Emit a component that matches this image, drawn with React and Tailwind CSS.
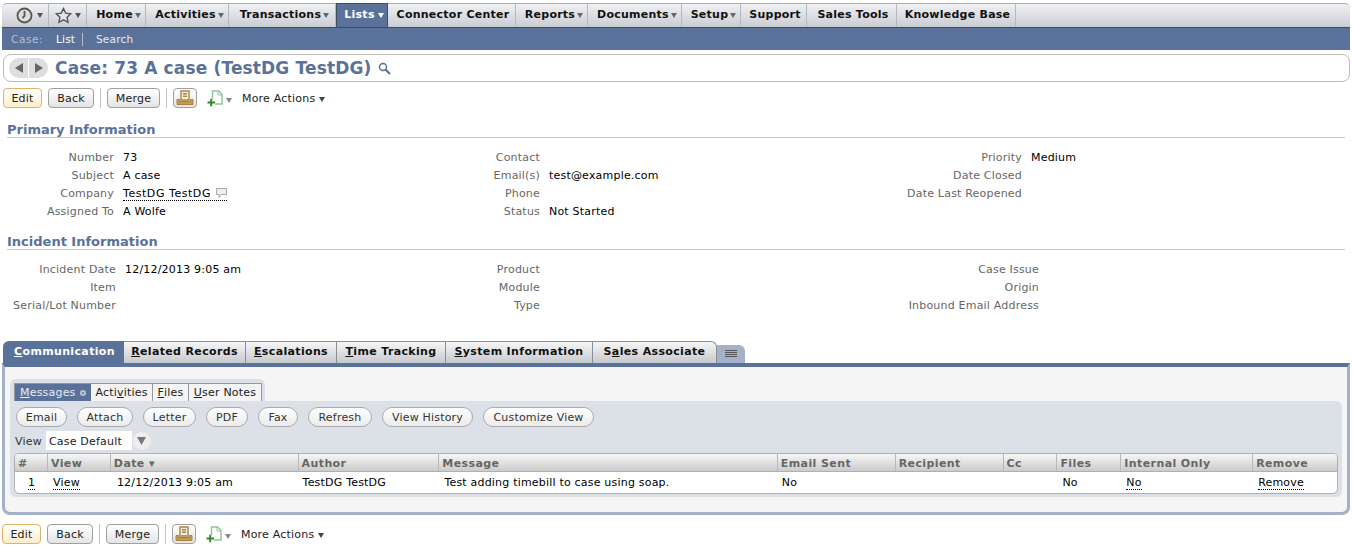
import React from 'react'

const navTabs = [
	{label: 'Home', w: 'w-[59px]', caret: true},
	{label: 'Activities', w: 'w-[83px]', caret: true},
	{label: 'Transactions', w: 'w-[107px]', caret: true},
	{label: 'Lists', w: 'w-[52px]', caret: true, active: true},
	{label: 'Connector Center', w: 'w-[128px]'},
	{label: 'Reports', w: 'w-[72px]', caret: true},
	{label: 'Documents', w: 'w-[94px]', caret: true},
	{label: 'Setup', w: 'w-[59px]', caret: true},
	{label: 'Support', w: 'w-[66px]'},
	{label: 'Sales Tools', w: 'w-[90px]'},
	{label: 'Knowledge Base', w: 'w-[119px]'},
]

const primaryRows = [
	['Number', '73', 'Contact', '', 'Priority', 'Medium'],
	['Subject', 'A case', 'Email(s)', 'test@example.com', 'Date Closed', ''],
	['Company', 'company', 'Phone', '', 'Date Last Reopened', ''],
	['Assigned To', 'A Wolfe', 'Status', 'Not Started', '', ''],
]

const incidentRows = [
	['Incident Date', '12/12/2013 9:05 am', 'Product', '', 'Case Issue', ''],
	['Item', '', 'Module', '', 'Origin', ''],
	['Serial/Lot Number', '', 'Type', '', 'Inbound Email Address', ''],
]

const mainTabs = [
	{pre: '', key: 'C', rest: 'ommunication', w: 'w-[121px] pl-[2px]', active: true},
	{pre: '', key: 'R', rest: 'elated Records', w: 'w-[122px]'},
	{pre: '', key: 'E', rest: 'scalations', w: 'w-[91px]'},
	{pre: '', key: 'T', rest: 'ime Tracking', w: 'w-[109px]'},
	{pre: '', key: 'S', rest: 'ystem Information', w: 'w-[147px]'},
	{pre: 'S', key: 'a', rest: 'les Associate', w: 'w-[124px]'},
]

const pills = [
	['Email', 'w-[51px] mr-[10px]'],
	['Attach', 'w-[56px] mr-[10px]'],
	['Letter', 'w-[53px] mr-[10px]'],
	['PDF', 'w-[42px] mr-[10px]'],
	['Fax', 'w-[40px] mr-[10px]'],
	['Refresh', 'w-[64px] mr-[10px]'],
	['View History', 'w-[91px] mr-[10px]'],
	['Customize View', 'w-[111px]'],
]

const columns = [
	['#', 'w-[32px]'],
	['View', 'w-[63px]'],
	['Date ▾', 'w-[188px]'],
	['Author', 'w-[141px]'],
	['Message', 'w-[339px]'],
	['Email Sent', 'w-[118px]'],
	['Recipient', 'w-[108px]'],
	['Cc', 'w-[54px]'],
	['Files', 'w-[64px]'],
	['Internal Only', 'w-[132px]'],
	['Remove', 'w-[85px]'],
]

function Caret({className = 'text-[#555]'})
{
	return (
		<svg width="6" height="5" viewBox="0 0 6 5" className={className}>
			<path d="M0 0h6L3 5z" fill="currentColor" />
		</svg>
	)
}

function Dotted({children})
{
	return <span className="border-b border-dotted border-black leading-[13px] inline-block">{children}</span>
}

function PrintIcon()
{
	return (
		<svg width="18" height="16" viewBox="0 0 18 16" fill="none">
			<path d="M5 1h8v9H5z" fill="#f8f1df" stroke="#a98440" strokeWidth="1.4" />
			<path d="M7 3.7h4M7 6.3h4" stroke="#a98440" strokeWidth="1.4" />
			<path d="M1 9.5v5h16v-5h-2.5v2h-11v-2z" fill="#c29b55" stroke="#a98440" />
		</svg>
	)
}

function AddIcon()
{
	return (
		<svg width="17" height="17" viewBox="0 0 17 17" fill="none">
			<path d="M5.5 9V1h6l3.5 3.5V14H8" fill="#fff" stroke="#93c793" strokeWidth="1.5" />
			<path d="M11 1v4h4" stroke="#93c793" />
			<path d="M0.5 12.5h7.5M4.2 8.7v7.6" stroke="#2f8a2f" strokeWidth="2" />
		</svg>
	)
}

function ActionBar({className})
{
	const btn = 'flex items-center justify-center pt-[2px] h-[20px] rounded-[4px] border border-[#a0a0a0] bg-gradient-to-b from-white to-[#e4e4e4] text-[#222]'
	return (
		<div className={`flex items-center h-[20px] ${className}`}>
			<button className="flex items-center justify-center pt-[2px] w-[39px] h-[20px] rounded-[4px] border border-[#dfb468] bg-gradient-to-b from-white to-[#fdeecb] text-[#222]">Edit</button>
			<button className={`${btn} w-[46px] ml-[6px]`}>Back</button>
			<div className="w-px h-[20px] bg-[#c4c4c4] ml-[6px]" />
			<button className={`${btn} w-[53px] ml-[6px]`}>Merge</button>
			<div className="w-px h-[20px] bg-[#c4c4c4] ml-[6px]" />
			<button className="flex items-center justify-center w-[24px] h-[20px] ml-[6px] rounded-[4px] border border-[#a0a0a0] bg-gradient-to-b from-white to-[#e4e4e4]"><PrintIcon /></button>
			<div className="ml-[10px]"><AddIcon /></div>
			<div className="ml-[2px] mt-[4px]"><Caret className="text-[#888]" /></div>
			<div className="flex items-center gap-[4px] pt-[3px] ml-[10px] text-[#222]">More Actions <Caret className="text-[#444]" /></div>
		</div>
	)
}

function Fields({rows, cols, firstLabel, firstValue})
{
	const label = 'text-right text-[#666] whitespace-nowrap'
	return (
		<div className={`grid h-[72px] auto-rows-[18px] items-center ${cols}`}>
			{rows.map((r) => (
				<React.Fragment key={r[0]}>
					<div className={`${label} ${firstLabel}`}>{r[0]}</div>
					<div className={`${firstValue} text-black`}>
						{r[1] === 'company' ? (
							<span className="inline-flex items-center border-b border-dotted border-black leading-[13px] tracking-[0.55px]">
								TestDG TestDG
								<svg width="11" height="10" viewBox="0 0 11 10" className="ml-[5px]">
									<path d="M.5.5h10v6H5L3 9.5v-3H.5z" fill="#eee" stroke="#aaa" />
								</svg>
							</span>
						) : r[1]}
					</div>
					<div className={label}>{r[2]}</div>
					<div className="pl-[9px] text-black">{r[3]}</div>
					<div className={label}>{r[4]}</div>
					<div className="pl-[9px] text-black">{r[5]}</div>
				</React.Fragment>
			))}
		</div>
	)
}

function SectionHead({children, className})
{
	return (
		<div className={`ml-[7px] mr-[8px] h-[16px] pt-px border-b border-[#c8c8c8] text-[13px] leading-[14px] font-bold tracking-normal text-[#5a7299] ${className}`}>
			{children}
		</div>
	)
}

export default function App()
{
	return (
		<div className="w-[1353px] h-[550px] overflow-hidden bg-white text-[11px] tracking-[0.2px] font-['DejaVu_Sans','Liberation_Sans',sans-serif]">

			{/* top nav */}
			<div className="flex h-[24px] mt-[3px] ml-[2px] mr-[3px] rounded-t-[5px] border-t border-[#a8aeb8] bg-gradient-to-b from-[#f0f1f3] to-[#c9ccd2] tracking-[0.25px]">
				<div className="flex items-center justify-center gap-[4px] w-[47px] pl-[9px] border-r border-[#b4b9c2]">
					<svg width="17" height="17" viewBox="0 0 17 17" fill="none" stroke="#555" strokeWidth="1.8">
						<circle cx="8.5" cy="8.5" r="7" fill="#ddd" />
						<path d="M8.5 4v5L6.5 11" />
					</svg>
					<Caret />
				</div>
				<div className="flex items-center justify-center gap-[3px] w-[38px] border-r border-[#b4b9c2]">
					<svg width="17" height="17" viewBox="0 0 17 17" fill="#e4e5e8" stroke="#555" strokeWidth="1.4">
						<path d="M8.5 1.5l2.2 4.6 5 .7-3.6 3.5.9 5-4.5-2.4L4 15.3l.9-5L1.3 6.8l5-.7z" />
					</svg>
					<Caret />
				</div>
				{navTabs.map((t) => (
					t.active ? (
						<div key={t.label} className={`flex items-center justify-center gap-[3px] ${t.w} pl-[4px] -mt-px h-[24px] border-t border-x border-[#3e4b60] bg-[#5a7299] font-bold text-white`}>
							{t.label}<Caret className="text-white" />
						</div>
					) : (
						<div key={t.label} className={`flex items-center justify-center gap-[2px] ${t.w} ${t.caret ? 'pl-[5px]' : 'pl-[3px]'} border-r border-[#b4b9c2] font-bold text-[#111]`}>
							{t.label}{t.caret && <Caret className="text-[#666]" />}
						</div>
					)
				))}
			</div>

			{/* sub nav */}
			<div className="flex items-center h-[23px] pt-px ml-[2px] mr-[3px] border-t border-[#3e4b60] bg-[#5a7299] text-[10.5px] pl-[9px]">
				<span className="w-[45px] tracking-[0.6px] text-[#b4c0d2]">Case:</span>
				<span className="w-[26px] text-white">List</span>
				<div className="w-px h-[13px] -mt-px bg-[#b4c0d2]" />
				<span className="ml-[13px] text-[#e6ebf2]">Search</span>
			</div>

			{/* title */}
			<div className="flex items-center h-[28px] mt-[4px] ml-[3px] mr-[3px] pl-[5px] rounded-[8px] border border-[#bcbcbc]">
				<div className="flex items-center justify-center w-[19px] h-[20px] rounded-l-full bg-[#dedede]">
					<svg width="8" height="10" viewBox="0 0 8 10"><path d="M8 0v10L0 5z" fill="#666" /></svg>
				</div>
				<div className="flex items-center justify-center w-[19px] h-[20px] ml-px rounded-r-full bg-[#dedede]">
					<svg width="8" height="10" viewBox="0 0 8 10"><path d="M0 0v10l8-5z" fill="#666" /></svg>
				</div>
				<h1 className="ml-[7px] pt-[2px] text-[17px] font-bold tracking-[0.15px] text-[#5a7299] whitespace-nowrap">Case: 73 A case (TestDG TestDG)</h1>
				<svg width="13" height="13" viewBox="0 0 13 13" fill="none" stroke="#5a7299" className="ml-[6px] mt-px">
					<circle cx="5" cy="5" r="3.5" strokeWidth="1.5" />
					<path d="M7.5 7.5l4.5 4.5" strokeWidth="2.2" />
				</svg>
			</div>

			<ActionBar className="mt-[6px] ml-[3px]" />

			<SectionHead className="mt-[14px]">Primary Information</SectionHead>
			<div className="mt-[11px]">
				<Fields rows={primaryRows} cols="grid-cols-[116px_309px_115px_367px_115px_1fr]" firstLabel="pr-[2px]" firstValue="pl-[7px]" />
			</div>

			<SectionHead className="mt-[13px]">Incident Information</SectionHead>
			<div className="mt-[11px]">
				<Fields rows={incidentRows} cols="grid-cols-[116px_309px_115px_367px_132px_1fr]" firstLabel="" firstValue="pl-[9px]" />
			</div>

			{/* tabs */}
			<div className="flex items-end h-[22px] mt-[8px] ml-[3px]">
				{mainTabs.map((t, i) => (
					<div
						key={t.rest}
						className={`flex items-center justify-center ${t.w} h-[22px] border-t text-[11px] tracking-[0.35px] font-bold ${
							t.active
								? 'rounded-tl-[6px] border-[#5a7299] bg-[#5a7299] text-white'
								: `border-r border-[#8a8f98] bg-gradient-to-b from-[#f6f6f6] to-[#c6c9ce] text-[#111] ${i === mainTabs.length - 1 ? 'rounded-tr-[6px]' : ''}`
						}`}
					>
						<span>{t.pre}<u>{t.key}</u>{t.rest}</span>
					</div>
				))}
				<div className="flex items-center justify-center w-[28px] h-[18px] rounded-tr-[6px] bg-[#a5b1c8]">
					<svg width="12" height="8" viewBox="0 0 12 8">
						<path d="M0 .5h12M0 2.5h12M0 4.5h12M0 6.5h12" stroke="#555" />
					</svg>
				</div>
			</div>

			{/* tab panel */}
			<div className="h-[152px] ml-[2px] mr-[3px] rounded-b-[8px] border-x-[3px] border-b-[3px] border-t-[4px] border-x-[#a5b1c8] border-b-[#a5b1c8] border-t-[#5a7299] bg-[#f5f5f5] pt-[12px] pl-[5px] pr-[5px]">
				<div className="w-[255px] h-[22px] pl-[4px] pt-[4px] rounded-t-[6px] bg-[#dce0e7]">
					<div className="flex h-[18px] w-[248px] border border-[#999] border-b-0 bg-[#f4f4f4]">
						<div className="flex items-center gap-[4px] w-[76px] pl-[5px] pt-px bg-[#5a7299] text-[#e8edf4]">
							<span><u>M</u>essages</span>
							<span className="w-[6px] h-[6px] rounded-full border-2 border-[#b9c3d3] bg-[#5a7299]" />
						</div>
						<div className="flex items-center justify-center w-[62px] pt-px border-r border-[#999] text-[#222]">Acti<u>v</u>ities</div>
						<div className="flex items-center justify-center w-[36px] pt-px border-r border-[#999] text-[#222]"><u>F</u>iles</div>
						<div className="flex items-center justify-center flex-1 pt-px text-[#222]"><u>U</u>ser Notes</div>
					</div>
				</div>
				<div className="h-[96px] rounded-b-[6px] rounded-tr-[6px] bg-[#dce0e7] px-[4px] pt-[6px]">
					<div className="flex h-[20px] ml-[2px]">
						{pills.map(([label, cls]) => (
							<button key={label} className={`flex items-center justify-center pt-[3px] h-[20px] rounded-full border border-[#aaa] bg-gradient-to-b from-white to-[#ebebeb] text-[#333] ${cls}`}>
								{label}
							</button>
						))}
					</div>
					<div className="flex items-center h-[19px] mt-[4px] ml-px pt-[3px] text-[#333]">
						<span>View</span>
						<div className="flex items-center w-[86px] h-[19px] -mt-[3px] ml-[4px] pt-[3px] pl-[3px] bg-white text-[#222]">Case Default</div>
						<div className="flex items-center justify-center w-[18px] h-[18px] -mt-[3px] ml-px rounded-full bg-[#eeeeee]">
							<svg width="9" height="8" viewBox="0 0 9 8"><path d="M0 0h9L4.5 8z" fill="#777" /></svg>
						</div>
					</div>
					<div className="w-[1324px] h-[41px] mt-[3px] rounded-[5px] border border-[#b0b0b0] bg-white overflow-hidden">
						<div className="flex h-[18px] border-b border-[#b0b0b0] bg-gradient-to-b from-[#f7f7f7] to-[#cbcbcb]">
							{columns.map(([label, w], i) => (
								<div key={label} className={`flex items-center ${w} ${i > 0 ? 'border-l border-[#b8b8b8]' : ''} pl-[3px] pt-[3px] font-bold tracking-[0.4px] text-[#666] whitespace-nowrap`}>
									{label}
								</div>
							))}
						</div>
						<div className="flex h-[21px] items-center pt-px text-black">
							<div className="w-[32px] pl-[13px]"><Dotted>1</Dotted></div>
							<div className="w-[63px] pl-[6px]"><Dotted>View</Dotted></div>
							<div className="w-[188px] pl-[7px]">12/12/2013 9:05 am</div>
							<div className="w-[141px] pl-[5px]">TestDG TestDG</div>
							<div className="w-[339px] pl-[6px]">Test adding timebill to case using soap.</div>
							<div className="w-[118px] pl-[5px]">No</div>
							<div className="w-[108px]" />
							<div className="w-[54px]" />
							<div className="w-[64px] pl-[6px]">No</div>
							<div className="w-[132px] pl-[6px]"><Dotted>No</Dotted></div>
							<div className="w-[85px] pl-[6px]"><Dotted>Remove</Dotted></div>
						</div>
					</div>
				</div>
			</div>

			<ActionBar className="mt-[9px] ml-[2px]" />
		</div>
	)
}
